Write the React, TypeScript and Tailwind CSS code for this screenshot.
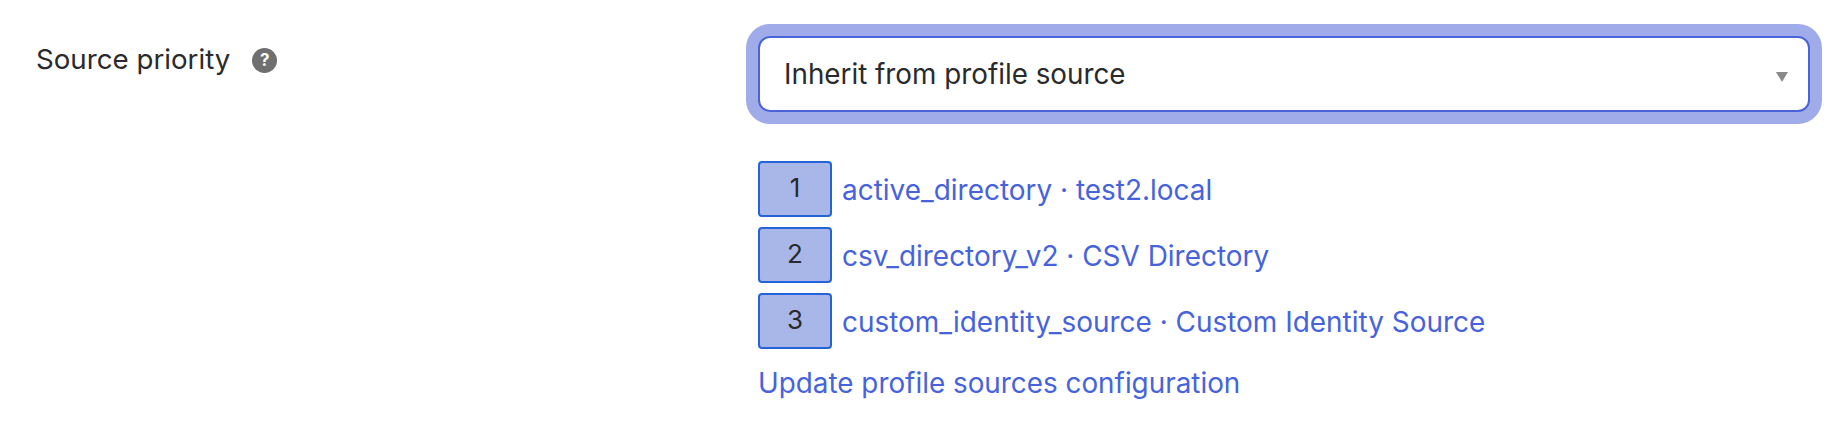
const SOURCES = [
  { id: 1, name: "active_directory · test2.local" },
  { id: 2, name: "csv_directory_v2 · CSV Directory" },
  { id: 3, name: "custom_identity_source · Custom Identity Source" },
];

const HelpIcon = () => (
  <div className="flex h-[25px] w-[25px] items-center justify-center rounded-full bg-[#6f6f6f] text-[17px] leading-none font-bold text-white">
    ?
  </div>
);

const App = () => {
  return (
    <div className="flex h-[432px] w-full bg-white pt-9 font-['Inter',sans-serif] text-[27.8px] text-[#2a2a2c]">
      <div className="w-[758px] shrink-0 pl-[36px]">
        <div className="flex h-[48px] items-center gap-[22px]">
          <span className="text-[27.7px]">Source priority</span>
          <HelpIcon />
        </div>
      </div>
      <div className="flex w-[1052px] flex-col">
        <div className="flex h-[76px] items-center justify-between rounded-[12px] border-2 border-[#4a63d8] bg-white pr-[20px] pl-[24px] shadow-[0_0_0_12px_#a0ace9]">
          <span className="pt-[2px]">Inherit from profile source</span>
          <svg className="mt-[6px]" width="12" height="10" viewBox="0 0 12 10">
            <path d="M0 0H12L6 10Z" fill="#8a8a8a" />
          </svg>
        </div>
        <div className="mt-[49px] flex flex-col gap-[10px]">
          {SOURCES.map((source) => (
            <div key={source.id} className="flex items-center gap-[10px]">
              <div className="flex h-[56px] w-[74px] items-center justify-center rounded-[4px] border-2 border-[#2563d9] bg-[#a8b7e8] pb-[4px] text-[26px]">
                {source.id}
              </div>
              <a className="pt-[4px] text-[27.95px] text-[#4763dc]">{source.name}</a>
            </div>
          ))}
        </div>
        <a className="mt-[14px] text-[27.85px] text-[#4763dc]">Update profile sources configuration</a>
      </div>
    </div>
  );
};

export default App;
